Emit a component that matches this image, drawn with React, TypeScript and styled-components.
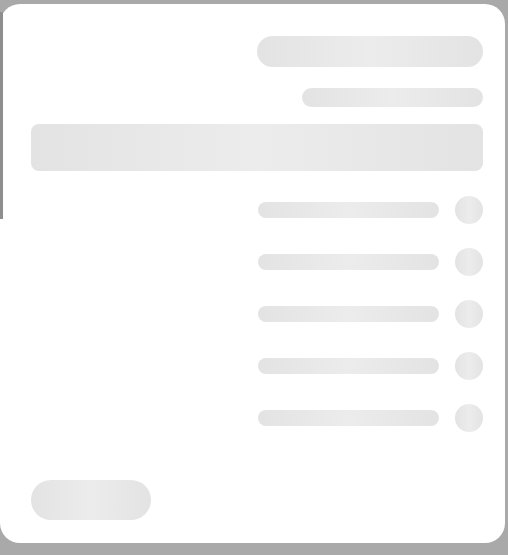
import React from "react";
import styled, { createGlobalStyle } from "styled-components";

const GlobalStyle = createGlobalStyle`
  html, body {
    margin: 0;
    padding: 0;
    background: #a9a9a9;
    font-family: "Liberation Sans", Arial, sans-serif;
  }
`;

const shimmer = `linear-gradient(90deg, #e3e3e3 0%, #ececec 50%, #e3e3e3 100%)`;

const Page = styled.div`
  position: relative;
  height: 555px;
  padding: 4px 3px 12px 0;
  box-sizing: border-box;
  overflow: hidden;

  &::before {
    content: "";
    position: absolute;
    left: 0;
    top: 12px;
    width: 3px;
    height: 207px;
    background: #8e8e8e;
  }
`;

const Card = styled.div`
  height: 100%;
  box-sizing: border-box;
  background: #ffffff;
  border-radius: 20px;
  padding: 32px 22px 23px 31px;
  display: flex;
  flex-direction: column;
`;

const Bone = styled.div<{ $w?: number; $h: number; $radius?: number }>`
  width: ${(p) => (p.$w ? `${p.$w}px` : "100%")};
  height: ${(p) => p.$h}px;
  border-radius: ${(p) => (p.$radius !== undefined ? `${p.$radius}px` : `${p.$h / 2}px`)};
  background: ${shimmer};
  flex-shrink: 0;
`;

const Header = styled.div`
  display: flex;
  flex-direction: column;
  align-items: flex-end;
  gap: 21px;
`;

const Banner = styled(Bone)`
  margin-top: 17px;
`;

const List = styled.div`
  margin-top: 25px;
  display: flex;
  flex-direction: column;
  gap: 24px;
`;

const Row = styled.div`
  display: flex;
  justify-content: flex-end;
  align-items: center;
  gap: 16px;
`;

const Footer = styled.div`
  margin-top: auto;
  display: flex;
`;

export default function App() {
  return (
    <>
      <GlobalStyle />
      <Page>
        <Card>
          <Header>
            <Bone $w={226} $h={31} />
            <Bone $w={181} $h={19} />
          </Header>
          <Banner $h={47} $radius={8} />
          <List>
            {[0, 1, 2, 3, 4].map((i) => (
              <Row key={i}>
                <Bone $w={181} $h={16} />
                <Bone $w={28} $h={28} />
              </Row>
            ))}
          </List>
          <Footer>
            <Bone $w={120} $h={40} />
          </Footer>
        </Card>
      </Page>
    </>
  );
}
